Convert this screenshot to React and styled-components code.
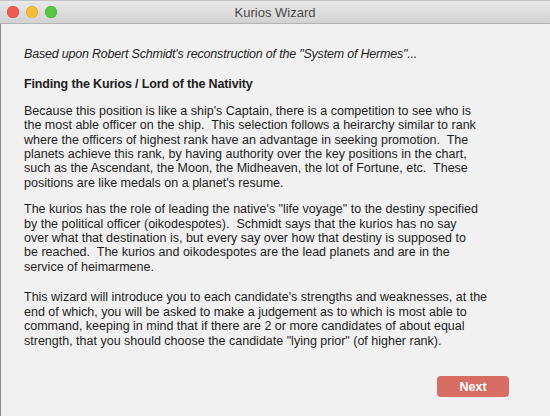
import styled, { createGlobalStyle } from "styled-components";

const GlobalStyle = createGlobalStyle`
  html, body {
    margin: 0;
    padding: 0;
    background: #f1f1f1;
  }
  body {
    font-family: "Liberation Sans", Arial, Helvetica, sans-serif;
  }
`;

const paragraphs = [
  [
    "Because this position is like a ship's Captain, there is a competition to see who is",
    "the most able officer on the ship.  This selection follows a heirarchy similar to rank",
    "where the officers of highest rank have an advantage in seeking promotion.  The",
    "planets achieve this rank, by having authority over the key positions in the chart,",
    "such as the Ascendant, the Moon, the Midheaven, the lot of Fortune, etc.  These",
    "positions are like medals on a planet's resume.",
  ],
  [
    "The kurios has the role of leading the native's \"life voyage\" to the destiny specified",
    "by the political officer (oikodespotes).  Schmidt says that the kurios has no say",
    "over what that destination is, but every say over how that destiny is supposed to",
    "be reached.  The kurios and oikodespotes are the lead planets and are in the",
    "service of heimarmene.",
  ],
  [
    "This wizard will introduce you to each candidate's strengths and weaknesses, at the",
    "end of which, you will be asked to make a judgement as to which is most able to",
    "command, keeping in mind that if there are 2 or more candidates of about equal",
    "strength, that you should choose the candidate \"lying prior\" (of higher rank).",
  ],
];

export default function App() {
  return (
    <>
      <GlobalStyle />
      <Window>
        <TitleBar>
          <Lights>
            <Light color="#ee5a52" edge="#d6463f" />
            <Light color="#f5bd3a" edge="#dca42a" />
            <Light color="#5ac443" edge="#45ad33" />
          </Lights>
          <Title>Kurios Wizard</Title>
        </TitleBar>
        <Body>
          <Content>
            <Intro>Based upon Robert Schmidt's reconstruction of the "System of Hermes"...</Intro>
            <Heading>Finding the Kurios / Lord of the Nativity</Heading>
            {paragraphs.map((lines, i) => (
              <Para key={i} spaced={i === 2}>
                {lines.map((l, j) => (
                  <Line key={j}>{l}</Line>
                ))}
              </Para>
            ))}
          </Content>
          <Footer>
            <NextButton>Next</NextButton>
          </Footer>
        </Body>
      </Window>
    </>
  );
}

const Window = styled.div`
  width: 550px;
  height: 416px;
  display: flex;
  flex-direction: column;
  background: #f1f1f1;
  overflow: hidden;
`;

const TitleBar = styled.div`
  height: 22px;
  flex-shrink: 0;
  position: relative;
  display: flex;
  align-items: center;
  justify-content: center;
  background: linear-gradient(#e8e8e8, #d2d2d2);
  border-top: 1px solid #c4c4c4;
  border-bottom: 1px solid #b4b4b4;
`;

const Lights = styled.div`
  position: absolute;
  left: 7px;
  top: 5px;
  display: flex;
  gap: 7px;
`;

const Light = styled.span`
  width: 12px;
  height: 12px;
  border-radius: 50%;
  background: ${(p) => p.color};
  box-shadow: inset 0 0 0 0.5px ${(p) => p.edge};
`;

const Title = styled.div`
  font-size: 13px;
  color: #4a4a4a;
`;

const Body = styled.div`
  flex: 1;
  display: flex;
  flex-direction: column;
  border-left: 1px solid #8c8c8c;
`;

const Content = styled.div`
  flex: 1;
  padding: 23px 0 0 23px;
  color: #1e1e1e;
  font-size: 12.5px;
  line-height: 14.4px;
`;

const Intro = styled.p`
  margin: 0;
  font-style: italic;
  letter-spacing: -0.2px;
`;

const Heading = styled.p`
  margin: 16px 0 0;
  font-weight: bold;
  letter-spacing: -0.15px;
`;

const Para = styled.p`
  margin: ${(p) => (p.spaced ? "16px" : "12px")} 0 0;
`;

const Line = styled.span`
  display: block;
  white-space: pre;
`;

const Footer = styled.div`
  display: flex;
  justify-content: flex-end;
  padding: 0 41px 19px 0;
`;

const NextButton = styled.button`
  width: 72px;
  height: 21px;
  border: none;
  border-radius: 4px;
  background: #d76d63;
  color: #fff;
  font-family: "Liberation Sans", Arial, sans-serif;
  font-size: 12.5px;
  font-weight: bold;
  padding: 0;
`;
